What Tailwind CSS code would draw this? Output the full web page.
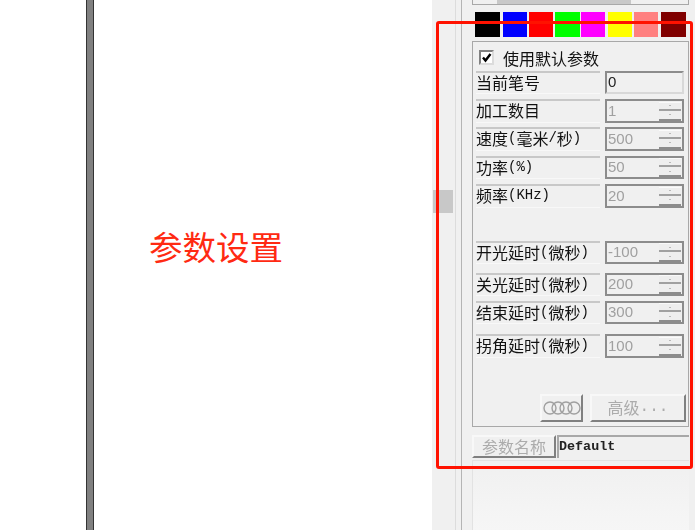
<!DOCTYPE html>
<html lang="zh-CN">
<head>
    <meta charset="UTF-8">
    <title>参数设置</title>
    <script src="https://cdn.jsdelivr.net/npm/@tailwindcss/browser@4"></script>
</head>
<body class="bg-white font-['Noto_Sans_CJK_SC',sans-serif]">
    <div class="relative flex h-[530px] w-[695px] overflow-hidden">
        <!-- left white canvas with dark edge -->
        <div class="flex h-full w-[432px] bg-white">
            <div class="ml-[86px] h-full w-[8px] border-x border-x-[#333] bg-[#808080]"></div>
        </div>

        <!-- right side panel -->
        <div class="flex h-full w-[263px] bg-[#f0f0f0]">
            <div class="h-full w-[24px] border-r border-[#dcdcdc]"></div>
            <div class="h-full w-[6px] border-r border-[#b4b4b4]"></div>
            <div class="ml-[10px] w-[217px] shrink-0 blur-[0.4px]">
                <div class="h-[5px] border-x border-b border-[#a8a8a8]">
                    <div class="ml-[24px] h-[4px] w-[134px] bg-[#c8c8c8]"></div>
                </div>
                <div class="ml-[3px] mt-[7px] flex h-[25px]">
                    <div class="h-full w-[25px] bg-black"></div>
                    <div class="ml-[3px] h-full w-[24px] bg-[#0000ff]"></div>
                    <div class="ml-[2px] h-full w-[24px] bg-[#ff0000]"></div>
                    <div class="ml-[2px] h-full w-[25px] bg-[#00ff00]"></div>
                    <div class="ml-[1px] h-full w-[24px] bg-[#ff00ff]"></div>
                    <div class="ml-[3px] h-full w-[24px] bg-[#ffff00]"></div>
                    <div class="ml-[2px] h-full w-[24px] bg-[#ff8080]"></div>
                    <div class="ml-[3px] h-full w-[25px] bg-[#800000]"></div>
                </div>

                <div class="mt-[4px] h-[386px] border border-[#a8a8a8] pl-[3px] pr-[2px]">
                    <div class="ml-[3px] mt-[8px] flex h-[15px] items-center">
                        <div class="flex h-[15px] w-[15px] items-center justify-center border-2 border-t-[#808080] border-l-[#808080] border-r-[#dcdcdc] border-b-[#dcdcdc] bg-white">
                            <svg class="h-[11px] w-[11px]" viewBox="0 0 11 11"><path d="M2 5.5 L4.5 8.5 L9.5 2" fill="none" stroke="#000" stroke-width="2.4"/></svg>
                        </div>
                        <span class="ml-[9px] whitespace-nowrap text-[16px] leading-[18px] text-[#111]">使用默认参数</span>
                    </div>
                    <div id="rows"></div>
                    <div class="mt-[36px] flex h-[28px] justify-end">
                        <div class="flex h-full w-[43px] items-center justify-center border-2 border-t-[#f8f8f8] border-l-[#f8f8f8] border-r-[#808080] border-b-[#808080]">
                            <svg class="h-[14px] w-[38px]" viewBox="0 0 38 14" fill="none" stroke="#a0a0a0" stroke-width="1.4"><circle cx="7" cy="7" r="6"/><circle cx="15" cy="7" r="6"/><circle cx="23" cy="7" r="6"/><circle cx="31" cy="7" r="6"/></svg>
                        </div>
                        <div class="ml-[7px] flex h-full w-[96px] items-center justify-center border-2 border-t-[#f8f8f8] border-l-[#f8f8f8] border-r-[#808080] border-b-[#808080] pb-[2px] text-[16px] text-[#acacac]">高级<span class="font-['Liberation_Mono']">...</span></div>
                    </div>
                </div>

                <div class="mt-[8px] flex h-[23px]">
                    <div class="flex h-full w-[84px] items-center justify-center border-2 border-t-[#f8f8f8] border-l-[#f8f8f8] border-r-[#808080] border-b-[#808080] pb-[2px] text-[16px] text-[#acacac]">参数名称</div>
                    <div class="ml-[1px] flex h-full flex-1 items-center border-t-2 border-l-2 border-t-[#a8a8a8] border-l-[#a8a8a8] font-['Liberation_Mono'] text-[13.4px] font-bold text-[#222]">Default</div>
                </div>
                <div class="mt-[2px] h-[70px] border-l border-t border-[#e2e2e2] bg-gradient-to-b from-[#f0f0f0] to-[#f6f6f6]"></div>
            </div>
        </div>

        <!-- splitter handle -->
        <div class="absolute left-[433px] top-[190px] h-[23px] w-[20px] bg-[#c8c8c8]"></div>

        <!-- red annotation -->
        <div class="absolute left-[436px] top-[21px] h-[448px] w-[257px] rounded-[3px] border-[3px] border-[#ff1200]"></div>
        <div class="absolute left-[149px] top-[223px] whitespace-nowrap text-[33.5px] leading-[46px] text-[#ff2a12]">参数设置</div>
    </div>

    <script>
        const rows = [
            { label: '当前笔号', value: '0', top: 'mt-[6px]', h: 'h-[23px]', spin: false },
            { label: '加工数目', value: '1', top: 'mt-[5px]', h: 'h-[24px]', spin: true },
            { label: '速度(毫米/秒)', value: '500', top: 'mt-[4px]', h: 'h-[24px]', spin: true },
            { label: '功率(%)', value: '50', top: 'mt-[5px]', h: 'h-[23px]', spin: true },
            { label: '频率(KHz)', value: '20', top: 'mt-[5px]', h: 'h-[24px]', spin: true },
            { label: '开光延时(微秒)', value: '-100', top: 'mt-[33px]', h: 'h-[23px]', spin: true },
            { label: '关光延时(微秒)', value: '200', top: 'mt-[9px]', h: 'h-[23px]', spin: true },
            { label: '结束延时(微秒)', value: '300', top: 'mt-[5px]', h: 'h-[23px]', spin: true },
            { label: '拐角延时(微秒)', value: '100', top: 'mt-[10px]', h: 'h-[24px]', spin: true }
        ];

        // half-width latin next to the CJK text, like the old bitmap font
        function formatLabel(text) {
            return text.replace(/[\x00-\x7f]+/g, m => `<span class="font-['Liberation_Mono'] text-[14px]">${m}</span>`);
        }

        const spinner = `
            <div class="ml-auto mr-[1px] flex h-full w-[22px] flex-col justify-center">
                <div class="flex h-[9px] items-center justify-center border-b-2 border-t border-b-[#a0a0a0] border-t-[#fafafa] bg-[#eeeeee]"><div class="h-[1px] w-[2px] bg-[#b8b8b8]"></div></div>
                <div class="flex h-[10px] items-center justify-center border-b-2 border-b-[#8c8c8c] bg-[#eeeeee]"><div class="h-[1px] w-[2px] bg-[#b8b8b8]"></div></div>
            </div>`;

        document.getElementById('rows').innerHTML = rows.map(row => `
            <div class="${row.top} ${row.h} flex">
                <div class="flex h-full w-[124px] items-center whitespace-nowrap border-t-2 border-t-[#c8c8c8] border-b border-b-[#f8f8f8] pb-[3px] text-[16px] leading-none text-[#111]">${formatLabel(row.label)}</div>
                <div class="ml-[5px] flex h-full w-[79px] items-center border-2 border-t-[#8c8c8c] border-l-[#8c8c8c] ${row.spin ? 'border-r-[#8c8c8c] border-b-[#8c8c8c]' : 'border-r-[#d8d8d8] border-b-[#d8d8d8]'} pl-[1px] font-['Liberation_Sans'] text-[15px] ${row.spin ? 'text-[#a0a0a0]' : 'text-[#222]'}">
                    <span>${row.value}</span>${row.spin ? spinner : ''}
                </div>
            </div>`).join('');
    </script>
</body>
</html>
